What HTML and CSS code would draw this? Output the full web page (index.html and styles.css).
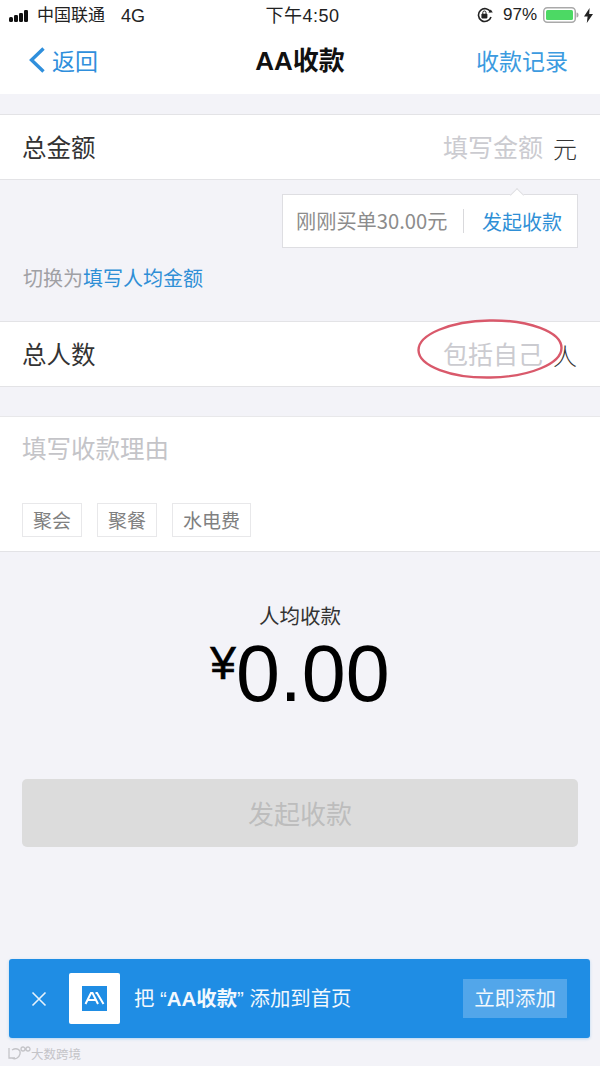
FILE: index.html
```html
<!DOCTYPE html>
<html lang="zh">
<head>
<meta charset="utf-8">
<title>AA收款</title>
<link rel="stylesheet" href="styles.css">
</head>
<body>
<div class="page">
  <header class="top">
    <div class="status">
      <div class="status-left">
        <svg class="signal" width="24" height="12" viewBox="0 0 24 12"><rect x="0" y="7" width="4" height="5" rx="1.500"/><rect x="5" y="5" width="4" height="7" rx="1.200"/><rect x="10" y="3" width="4" height="9" rx="1.200"/><rect x="15" y="0" width="4" height="12" rx="1.200"/></svg>
        <span class="carrier">中国联通</span><span class="net">4G</span>
      </div>
      <div class="status-time">下午4:50</div>
      <div class="status-right">
        <svg class="lock" width="18" height="16" viewBox="0 0 18 16"><path d="M14.600 5.200A6.400 6.400 0 1 0 15 10" fill="none" stroke="#222" stroke-width="1.600"/><path d="M12.400 5.600h4.400l-2-3z" fill="#222"/><rect x="5.400" y="6.800" width="6" height="4.600" rx=".8" fill="#222"/><path d="M6.800 7V5.600a1.600 1.600 0 0 1 3.200 0V7" fill="none" stroke="#222" stroke-width="1"/></svg>
        <span class="pct">97%</span>
        <svg class="battery" width="36" height="16" viewBox="0 0 36 16"><rect x=".75" y=".75" width="31.500" height="14.500" rx="3.500" fill="none" stroke="#a9a9a9" stroke-width="1.500"/><rect x="3" y="3" width="27" height="10" rx="1.500" fill="#4cd964"/><path d="M33.500 5.500c1.500 0 2 1 2 2.500s-.5 2.500-2 2.500z" fill="#a9a9a9"/></svg>
        <svg class="bolt" width="9" height="15" viewBox="0 0 9 15"><path d="M5.600 0 0 8.500h3.600L2.800 15 9 6h-3.800z" fill="#222"/></svg>
      </div>
    </div>
    <nav class="nav">
      <a class="back"><svg width="20" height="28" viewBox="0 0 20 28"><path d="M16.500 2.500 4.500 14l12 11.500" fill="none" stroke="#2f8fdc" stroke-width="3.400"/></svg><span>返回</span></a>
      <h1 class="title">AA收款</h1>
      <a class="records">收款记录</a>
    </nav>
  </header>

  <section class="row row-amount">
    <span class="row-label">总金额</span>
    <span class="row-end"><span class="placeholder">填写金额</span><span class="unit">元</span></span>
  </section>

  <div class="tip-wrap">
    <div class="tip">
      <span class="tip-text">刚刚买单30.00元</span>
      <span class="tip-action">发起收款</span>
    </div>
  </div>

  <p class="switch">切换为<a>填写人均金额</a></p>

  <section class="row row-people">
    <span class="row-label">总人数</span>
    <span class="row-end">
      <span class="placeholder">包括自己</span><span class="unit">人</span>
      <svg class="ring" width="148" height="62" viewBox="0 0 148 62"><ellipse cx="74" cy="30" rx="71.500" ry="28.500" transform="rotate(-1 74 30)" fill="none" stroke="#d9596b" stroke-width="2.400"/></svg>
    </span>
  </section>

  <section class="reason">
    <div class="reason-text">填写收款理由</div>
    <div class="chips"><span class="chip">聚会</span><span class="chip">聚餐</span><span class="chip">水电费</span></div>
  </section>

  <section class="result">
    <div class="result-label">人均收款</div>
    <div class="result-amount"><span class="yen">¥</span>0.00</div>
  </section>

  <div class="submit">发起收款</div>

  <aside class="banner">
    <svg class="close" width="16" height="16" viewBox="0 0 16 16"><path d="M1.500 1.500l13 13M14.500 1.500l-13 13" stroke="#e6f2fc" stroke-width="1.600" fill="none"/></svg>
    <div class="logo"><svg width="25" height="25" viewBox="0 0 25 25"><rect width="25" height="25" fill="#1f8de4"/><path d="M3.500 18 9 7h1.500L16 18M6 14h7M13.500 7h1.500L21.500 18" fill="none" stroke="#fff" stroke-width="2"/></svg></div>
    <div class="banner-text">把 “<b>AA收款</b>” 添加到首页</div>
    <div class="banner-btn">立即添加</div>
  </aside>

  <footer class="mark">
    <svg width="25" height="15" viewBox="0 0 25 15"><path d="M2 2v10h6M5 4c5-3 9 0 8 4s-5 6-8 4M14 3a2 2 0 1 0 4 0 2 2 0 1 0-4 0M19 3a2 2 0 1 0 4 0 2 2 0 1 0-4 0" fill="none" stroke="#c4c4c8" stroke-width="1.300"/></svg>
    <span>大数跨境</span>
  </footer>
</div>
</body>
</html>
```
FILE: styles.css
```css
* { box-sizing: border-box; }
html, body { margin: 0; padding: 0; }
body {
  width: 600px;
  height: 1066px;
  overflow: hidden;
  background: #f3f3f8;
  font-family: "Noto Sans CJK SC", "Liberation Sans", sans-serif;
  color: #222;
}
.page { display: flex; flex-direction: column; height: 1066px; }

.top { background: #fff; height: 94px; }
.status {
  height: 30px;
  display: grid;
  grid-template-columns: 1fr auto 1fr;
  align-items: center;
  padding: 0 8px 0 9px;
  font-size: 17px;
}
.status-left { display: flex; align-items: center; }
.signal { fill: #111; margin-right: 5px; margin-top: 1px; }
.carrier { font-size: 17px; line-height: 24px; margin-top: -2px; margin-left: -1px; }
.net { font-family: "Liberation Sans", sans-serif; font-size: 18px; margin-left: 16px; margin-top: 2px; }
.status-time { font-size: 18px; font-family: "Liberation Sans", "Noto Sans CJK SC", sans-serif; letter-spacing: .5px; margin-bottom: 2px; padding-left: 4px; }
.status-right { display: flex; align-items: center; justify-content: flex-end; }
.lock { margin-right: 9px; margin-left: -3px; }
.pct { font-family: "Liberation Sans", sans-serif; font-size: 17px; margin-right: 6px; }
.bolt { margin-left: 5px; margin-right: -1px; }

.nav {
  height: 64px;
  padding: 0 32px 4px 29px;
  display: flex;
  align-items: center;
  justify-content: space-between;
  position: relative;
}
.back { display: flex; align-items: center; color: #2f8fdc; font-size: 23px; }
.back svg { margin-right: 5px; margin-left: -2px; }
.title {
  margin: 0 0 3px;
  font-size: 26px;
  font-weight: 700;
  font-family: "Liberation Sans", "Noto Sans CJK SC", sans-serif;
  color: #111;
  position: absolute;
  left: 0;
  right: 0;
  text-align: center;
  pointer-events: none;
}
.records { color: #3c9be0; font-size: 23px; }

.row {
  background: #fff;
  border-top: 1px solid #e3e3e6;
  border-bottom: 1px solid #e3e3e6;
  height: 66px;
  display: flex;
  align-items: center;
  justify-content: space-between;
  padding: 0 23px 0 22px;
  font-size: 24px;
}
.row-label { font-size: 24.500px; color: #333; margin-top: -2px; }
.row-end { display: flex; align-items: center; position: relative; }
.placeholder { color: #cbcbd0; font-size: 25px; margin-bottom: 2px; }
.unit { margin-left: 10px; color: #333; font-weight: 300; }
.row-amount { margin-top: 20px; }
.ring { position: absolute; left: -27px; top: -16px; }

.tip-wrap { display: flex; justify-content: flex-end; padding: 14px 22px 0 0; }
.tip {
  width: 296px;
  height: 54px;
  background: #fff;
  border: 1px solid #dedee2;
  display: flex;
  align-items: center;
  padding: 0 13px;
  position: relative;
}
.tip::before {
  content: "";
  position: absolute;
  top: -5px;
  right: 55px;
  width: 9px;
  height: 9px;
  background: #fff;
  border-top: 1px solid #dedee2;
  border-left: 1px solid #dedee2;
  transform: rotate(45deg);
}
.tip-text { color: #8c8c8c; font-size: 20.200px; flex: 1; white-space: nowrap; border-right: 1px solid #d9d9dc; line-height: 24px; }
.tip-action { color: #2f8fd6; font-size: 20px; margin-left: 18px; margin-right: 2px; white-space: nowrap; }

.switch { margin: 16px 0 29px 23px; font-size: 20px; line-height: 28px; color: #a0a0a4; }
.switch a { color: #2f8fd6; }

.reason {
  margin-top: 29px;
  height: 136px;
  background: #fff;
  border-top: 1px solid #e8e8ea;
  border-bottom: 1px solid #e3e3e6;
  padding: 14px 22px 0;
}
.reason-text { font-size: 24.500px; line-height: 34px; color: #c4c4c8; }
.chips { display: flex; gap: 15px; margin-top: 38px; }
.chip {
  height: 34px;
  padding: 0 10px;
  border: 1px solid #e8e8ea;
  font-size: 19px;
  line-height: 32px;
  color: #808080;
  background: #fff;
}

.result { text-align: center; padding-top: 49px; }
.result-label { font-size: 20.500px; line-height: 28px; color: #333; }
.result-amount {
  font-family: "Liberation Sans", sans-serif;
  font-size: 79px;
  line-height: 90px;
  color: #000;
  margin-top: -11px;
}
.yen { font-size: 46px; vertical-align: 22px; -webkit-text-stroke: .6px #000; }

.submit {
  margin: 60px 22px 0;
  height: 68px;
  background: #dcdcdc;
  border-radius: 5px;
  text-align: center;
  font-size: 26px;
  line-height: 68px;
  color: #bdbdbd;
}

.banner {
  margin: 112px 10px 0 9px;
  height: 79px;
  background: #1f8de4;
  border-radius: 3px;
  box-shadow: 0 1px 3px rgba(31, 141, 228, .3);
  display: flex;
  align-items: center;
  color: #f2f8fd;
  font-size: 20.400px;
  padding: 0 23px 0 22px;
}
.close { margin-right: 22px; flex: none; }
.logo {
  width: 51px;
  height: 51px;
  background: #fff;
  border-radius: 2px;
  display: flex;
  align-items: center;
  justify-content: center;
  flex: none;
  margin-right: 14px;
}
.banner-text { flex: 1; white-space: nowrap; font-family: "Liberation Sans", "Noto Sans CJK SC", sans-serif; margin-bottom: 4px; }
.banner-text b { font-weight: 700; }
.banner-btn {
  width: 104px;
  height: 39px;
  line-height: 37px;
  text-align: center;
  background: #52a6ea;
}
.mark { display: flex; align-items: center; padding: 6px 0 0 7px; color: #c4c4c8; font-size: 12.500px; }
.mark span { margin-left: -1px; }
```
